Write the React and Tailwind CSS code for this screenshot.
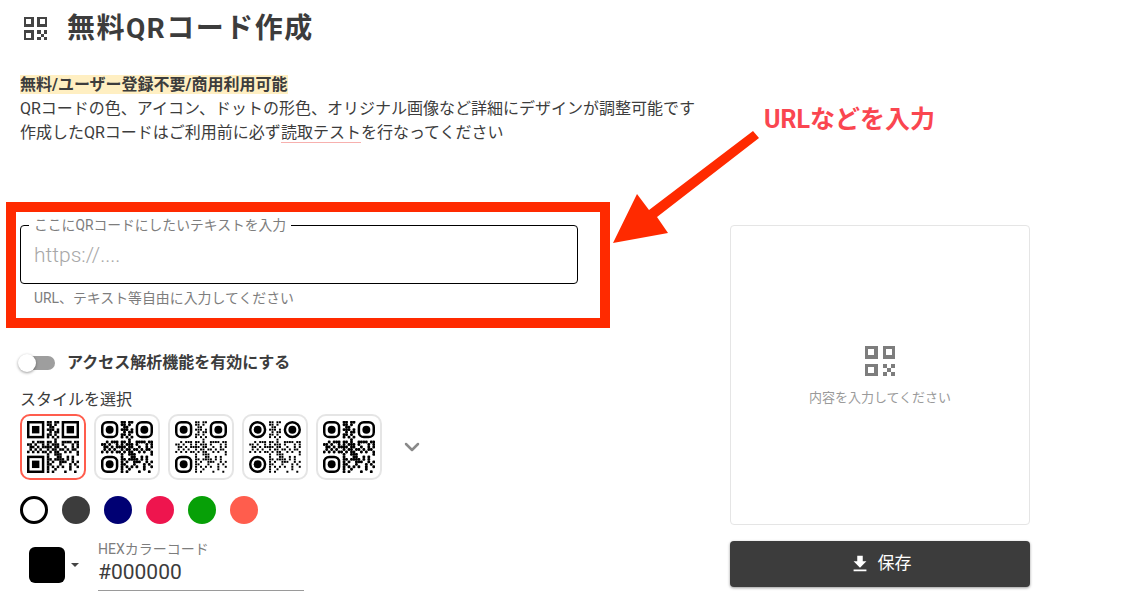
import { ChevronDown } from 'lucide-react';

const FONT = "font-['Roboto','Noto_Sans_CJK_JP',sans-serif]";

// 21x21 module map, finder corners are drawn separately
const MODULES = [
  '........11.11........',
  '........11.1.........',
  '.........11..........',
  '........111.1........',
  '.........1.11........',
  '........11.1.........',
  '........1.1.1........',
  '...........1.........',
  '..1.111.11.1..1111.11',
  '11.1..1.1.111.1...1.1',
  '.11.1.1111.11..1..1.1',
  '.1.1.1..1.11.11.1.11.',
  '1.1.1.11.1.11..1.1..1',
  '........1..111......1',
  '........1...11..1.1..',
  '........11.1111.1.1..',
  '........1.1..111..1.1',
  '........11...1...1.1.',
  '........1.1.1.1..1..1',
  '........1..1.....1...',
  '........1.1....1...1.',
];

const Finder = ({ x, y, kind }) => {
  if (kind === 'square') {
    return (
      <g>
        <rect x={x + 0.5} y={y + 0.5} width="6" height="6" fill="none" stroke="#000" />
        <rect x={x + 2} y={y + 2} width="3" height="3" />
      </g>
    );
  }
  if (kind === 'rounded') {
    return (
      <g>
        <rect x={x + 0.5} y={y + 0.5} width="6" height="6" rx="2" fill="none" stroke="#000" />
        <circle cx={x + 3.5} cy={y + 3.5} r="1.6" />
      </g>
    );
  }
  return (
    <g>
      <circle cx={x + 3.5} cy={y + 3.5} r="3" fill="none" stroke="#000" />
      <circle cx={x + 3.5} cy={y + 3.5} r="1.6" />
    </g>
  );
};

const QrCode = ({ finder, dots }) => (
  <svg viewBox="0 0 21 21" className="h-[52px] w-[52px]">
    {MODULES.flatMap((row, r) =>
      row.split('').map((c, i) => {
        if (c !== '1') return null;
        if (dots === 'small') return <rect key={`${r}-${i}`} x={i + 0.1} y={r + 0.1} width="0.8" height="0.8" />;
        if (dots === 'fluid') return <rect key={`${r}-${i}`} x={i - 0.08} y={r - 0.08} width="1.16" height="1.16" rx="0.45" />;
        return <rect key={`${r}-${i}`} x={i} y={r} width="1.02" height="1.02" />;
      })
    )}
    <Finder x={0} y={0} kind={finder} />
    <Finder x={14} y={0} kind={finder} />
    <Finder x={0} y={14} kind={finder} />
  </svg>
);

const QrIcon = ({ className }) => (
  <svg viewBox="0 0 24 24" className={className} fill="currentColor" shapeRendering="crispEdges">
    <path fillRule="evenodd" d="M0 0h10v10H0zM2.500 2.500v5h5v-5zM14 0h10v10H14zM16.500 2.500v5h5v-5zM0 14h10v10H0zM2.500 16.500v5h5v-5z" />
    <path d="M14 14h3.300v3.300H14zM20.700 14H24v3.300h-3.300zM17.300 17.300h3.400v3.400h-3.400zM14 20.700h3.300V24H14zM20.700 20.700H24V24h-3.300z" />
  </svg>
);

const styles = [
  { finder: 'square', dots: 'square', active: true },
  { finder: 'rounded', dots: 'fluid' },
  { finder: 'rounded', dots: 'small' },
  { finder: 'circle', dots: 'small' },
  { finder: 'rounded', dots: 'fluid' },
];

const colors = ['bg-[#3c3c3c]', 'bg-[#000073]', 'bg-[#ee154e]', 'bg-[#07a007]', 'bg-[#ff5d4d]'];

export default function App() {
  return (
    <div className={`relative h-[611px] w-[1127px] overflow-hidden bg-white ${FONT} text-[#3c3c3c]`}>
      <header className="flex h-[56px] items-center pt-[1px] pl-[24px]">
        <QrIcon className="h-[23px] w-[23px] text-[#444]" />
        <h1 className="ml-[20px] text-[28px] leading-none font-bold tracking-[1.5px]">無料QRコード作成</h1>
      </header>

      <div className="flex pl-[6px]">
        <div className="w-[604px] shrink-0">
          <div className="mt-[17px] ml-[14px] w-[700px] text-[16px] leading-[24px]">
            <p><span className="bg-[#ffefc2] font-bold">無料/ユーザー登録不要/商用利用可能</span></p>
            <p>QRコードの色、アイコン、ドットの形色、オリジナル画像など詳細にデザインが調整可能です</p>
            <p>作成したQRコードはご利用前に必ず<span className="border-b border-[#f7b0ae]">読取テスト</span>を行なってください</p>
          </div>

          <div className="mt-[57px] h-[126px] border-[10px] border-[#ff2a00] pt-[14px] pl-[4px]">
            <div className="relative -mt-px h-[59px] w-[558px] rounded border border-black px-[13px] pt-[19px]">
              <span className="absolute -top-[8px] left-[8px] bg-white px-[5px] text-[13.800px] leading-[14px] text-[#7d7d7d]">ここにQRコードにしたいテキストを入力</span>
              <span className="text-[21px] leading-[21px] font-light text-[#a8a8a8]">https://....</span>
            </div>
            <p className="mt-[6px] ml-[14px] text-[13.900px] leading-[16px] text-[#7d7d7d]">URL、テキスト等自由に入力してください</p>
          </div>

          <div className="mt-[25px] ml-[15px] flex items-center">
            <div className="relative h-[14px] w-[34px] rounded-full bg-[#9e9e9e]">
              <span className="absolute -top-[2px] -left-[3px] h-[18px] w-[18px] rounded-full bg-white shadow-[0_1px_3px_rgba(0,0,0,0.4)]" />
            </div>
            <span className="ml-[12px] text-[16px] leading-[20px] font-bold">アクセス解析機能を有効にする</span>
          </div>

          <p className="mt-[17px] ml-[14px] text-[16px] leading-[20px]">スタイルを選択</p>

          <div className="mt-[4px] ml-[14px] flex items-center gap-[8px]">
            {styles.map((s, i) => (
              <div
                key={i}
                className={`flex h-[66px] w-[66px] items-center justify-center rounded-[10px] border-2 ${s.active ? 'border-[#ff5d4d]' : 'border-[#e5e5e5]'}`}
              >
                <QrCode finder={s.finder} dots={s.dots} />
              </div>
            ))}
            <ChevronDown className="ml-[10px] h-[24px] w-[24px] text-[#8a8a8a]" strokeWidth={2.500} />
          </div>

          <div className="mt-[16px] ml-[14px] flex gap-[14px]">
            <span className="h-[28px] w-[28px] rounded-full border-[3px] border-black bg-white" />
            {colors.map((c) => (
              <span key={c} className={`h-[28px] w-[28px] rounded-full ${c}`} />
            ))}
          </div>

          <div className="mt-[17px] ml-[23px] flex">
            <div className="mt-[6px] flex items-center self-start">
              <span className="h-[36px] w-[36px] rounded-[6px] bg-black" />
              <span className="ml-[6px] h-0 w-0 border-x-[4px] border-t-[4px] border-x-transparent border-t-[#444]" />
            </div>
            <div className="ml-[19px] w-[206px] border-b border-[#9a9a9a]">
              <p className="text-[14px] leading-[16px] text-[#7d7d7d]">HEXカラーコード</p>
              <p className="mt-[2px] pb-[5px] text-[21px] leading-[26px]">#000000</p>
            </div>
          </div>
        </div>

        <div className="mt-[169px] ml-[120px] w-[300px]">
          <div className="flex h-[300px] flex-col items-center rounded border border-[#e5e5e5] pt-[120px]">
            <QrIcon className="h-[30px] w-[30px] text-[#7d7d7d]" />
            <p className="mt-[14px] text-[13px] leading-[16px] text-[#9a9a9a]">内容を入力してください</p>
          </div>
          <button className="mt-[16px] flex h-[46px] w-[300px] items-center justify-center rounded bg-[#3c3c3c] text-[17px] text-white shadow-[0_1px_3px_rgba(0,0,0,0.4)]">
            <svg viewBox="0 0 24 24" className="mr-[7px] h-[22px] w-[22px]" fill="currentColor">
              <path d="M19 9h-4V3H9v6H5l7 7 7-7zM5 18v2h14v-2H5z" />
            </svg>
            保存
          </button>
        </div>
      </div>

      {/* annotation on top of the form */}
      <p className="absolute top-[105px] left-[764px] text-[25px] leading-[30px] font-bold text-[#fa4650]">URLなどを入力</p>
      <svg className="absolute top-[125px] left-[605px]" width="160" height="125" viewBox="0 0 160 125" fill="#ff2a00">
        <path d="M148 6 L154 13 L52 92 L63 108 L8 118 L32 69 L44 85 Z" />
      </svg>
    </div>
  );
}
